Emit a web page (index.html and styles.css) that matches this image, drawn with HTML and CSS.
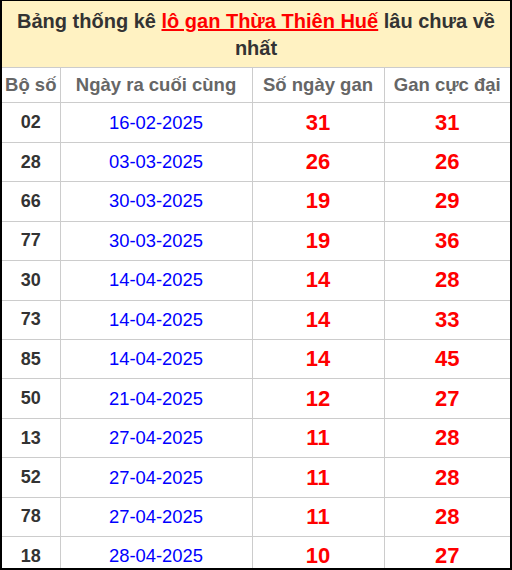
FILE: index.html
```html
<!DOCTYPE html>
<html lang="vi">
<head>
<meta charset="utf-8">
<link rel="stylesheet" href="styles.css">
</head>
<body>
<div class="frame">
  <div class="title">Bảng thống kê <a class="hl" href="#">lô gan Thừa Thiên Huế</a> lâu chưa về nhất</div>
  <table class="tbl">
    <colgroup><col class="c1"><col class="c2"><col class="c3"><col class="c4"></colgroup>
    <thead>
      <tr><th>Bộ số</th><th>Ngày ra cuối cùng</th><th>Số ngày gan</th><th>Gan cực đại</th></tr>
    </thead>
    <tbody>
      <tr><td class="num">02</td><td class="date">16-02-2025</td><td class="red">31</td><td class="red">31</td></tr>
      <tr><td class="num">28</td><td class="date">03-03-2025</td><td class="red">26</td><td class="red">26</td></tr>
      <tr><td class="num">66</td><td class="date">30-03-2025</td><td class="red">19</td><td class="red">29</td></tr>
      <tr><td class="num">77</td><td class="date">30-03-2025</td><td class="red">19</td><td class="red">36</td></tr>
      <tr><td class="num">30</td><td class="date">14-04-2025</td><td class="red">14</td><td class="red">28</td></tr>
      <tr><td class="num">73</td><td class="date">14-04-2025</td><td class="red">14</td><td class="red">33</td></tr>
      <tr><td class="num">85</td><td class="date">14-04-2025</td><td class="red">14</td><td class="red">45</td></tr>
      <tr><td class="num">50</td><td class="date">21-04-2025</td><td class="red">12</td><td class="red">27</td></tr>
      <tr><td class="num">13</td><td class="date">27-04-2025</td><td class="red">11</td><td class="red">28</td></tr>
      <tr><td class="num">52</td><td class="date">27-04-2025</td><td class="red">11</td><td class="red">28</td></tr>
      <tr><td class="num">78</td><td class="date">27-04-2025</td><td class="red">11</td><td class="red">28</td></tr>
      <tr><td class="num">18</td><td class="date">28-04-2025</td><td class="red">10</td><td class="red">27</td></tr>
    </tbody>
  </table>
</div>
</body>
</html>
```

FILE: styles.css
```css
html, body {
  margin: 0;
  padding: 0;
  background: #fff;
}
.frame {
  width: 512px;
  height: 570px;
  box-sizing: border-box;
  border-style: solid;
  border-color: #000;
  border-width: 1px 2px 2px 2px;
  overflow: hidden;
  font-family: "Liberation Sans", Arial, sans-serif;
}
.title {
  background: #fff2c2;
  color: #333;
  font-weight: bold;
  font-size: 20px;
  line-height: 26.5px;
  text-align: center;
  padding: 7px 8px 6px;
}
.hl {
  color: #f00;
  text-decoration: underline;
}
.tbl {
  width: 508px;
  border-collapse: collapse;
  table-layout: fixed;
}
.c1 { width: 58px; }
.c2 { width: 192px; }
.c3 { width: 132px; }
.c4 { width: 126px; }
.tbl th, .tbl td {
  border: 1px solid #ccc;
  text-align: center;
  padding: 0;
}
.tbl tr > :first-child { border-left: none; }
.tbl tr > :last-child { border-right: none; }
.tbl th {
  height: 34.4px;
  color: #666;
  font-size: 18.5px;
  font-weight: bold;
}
.tbl td {
  height: 38.45px;
}
.num {
  color: #333;
  font-weight: bold;
  font-size: 18px;
}
.date {
  color: #00f;
  font-size: 18.4px;
}
.red {
  color: #f00;
  font-weight: bold;
  font-size: 22px;
}
```
